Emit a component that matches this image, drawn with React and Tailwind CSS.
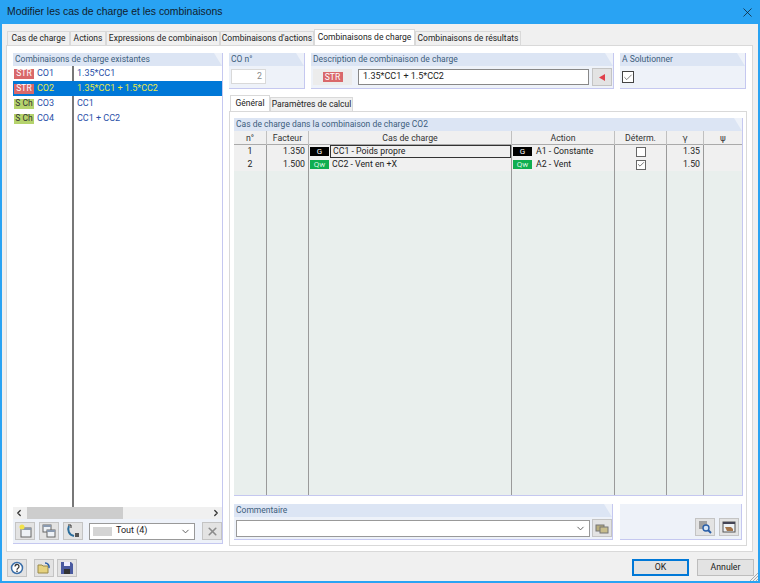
import { Check, ChevronDown, ChevronLeft, ChevronRight, X } from "lucide-react";

const font = { fontFamily: 'Roboto, "Liberation Sans", Arial, sans-serif' };

const tabs = [
  ["Cas de charge", "w-[63px]"],
  ["Actions", "w-[36px]"],
  ["Expressions de combinaison", "w-[114px]"],
  ["Combinaisons d'actions", "w-[94px]"],
  ["Combinaisons de charge", "w-[101px]"],
  ["Combinaisons de résultats", "w-[106px]"],
];

const combos = [
  { badge: "STR", color: "bg-[#d9686a] text-white", id: "CO1", text: "1.35*CC1" },
  { badge: "STR", color: "bg-[#d9686a] text-white", id: "CO2", text: "1.35*CC1 + 1.5*CC2", active: true },
  { badge: "S Ch", color: "bg-[#b5d36c] text-[#333]", id: "CO3", text: "CC1" },
  { badge: "S Ch", color: "bg-[#b5d36c] text-[#333]", id: "CO4", text: "CC1 + CC2" },
];

const cols = "grid-cols-[33px_42px_203px_103px_52px_37px_38px]";

function GroupHead({ children }) {
  return (
    <div className="h-[13px] shrink-0 bg-[#dce5f4] pl-[2px] text-[8.5px] leading-[13px] whitespace-nowrap text-[#3c5d7c] [clip-path:polygon(0_0,calc(100%-8px)_0,100%_100%,0_100%)]">
      {children}
    </div>
  );
}

function ToolButton({ children, className = "" }) {
  return (
    <div className={`flex h-[18px] w-[20px] items-center justify-center border border-[#c4c4c4] bg-[#e3e3e3] ${className}`}>
      {children}
    </div>
  );
}

function WinIcon() {
  return (
    <svg width="14" height="14" viewBox="0 0 14 14">
      <rect x="1" y="1" width="8" height="7" fill="#eef2f6" stroke="#666" />
      <rect x="1" y="1" width="8" height="2" fill="#8a9ab0" />
      <rect x="5" y="6" width="8" height="7" fill="#eef2f6" stroke="#666" />
      <rect x="5" y="6" width="8" height="2" fill="#8a9ab0" />
    </svg>
  );
}

export default function App() {
  return (
    <div className="flex h-[583px] w-[760px] flex-col overflow-hidden border-2 border-t-0 border-[#29a3f3] bg-[#f0f0f0] text-[8.75px] whitespace-nowrap text-[#222]" style={font}>
      <div className="flex h-[24px] shrink-0 items-center justify-between bg-[#29a3f3] pr-[3px] pl-[5px]">
        <span className="font-['Liberation_Sans'] text-[10.4px] text-[#10202c]">Modifier les cas de charge et les combinaisons</span>
        <X size={15} strokeWidth={1.2} className="text-[#10202c]" />
      </div>

      <div className="flex h-[21px] shrink-0 items-end pl-[5px] text-[8.5px]">
        {tabs.map(([label, w], i) => (
          <div
            key={label}
            className={
              i === 4
                ? `${w} z-10 flex h-[16px] items-center justify-center border border-b-0 border-[#d9d9d9] bg-white`
                : `${w} flex h-[14px] items-center justify-center border border-b-0 border-[#d9d9d9] bg-[#f0f0f0]`
            }
          >
            {label}
          </div>
        ))}
      </div>

      <div className="mr-[5px] ml-[4px] flex h-[507px] shrink-0 gap-[6px] border border-[#d9d9d9] bg-white pt-[7px] pl-[6px]">
        {/* left list */}
        <div className="flex h-[491px] w-[210px] shrink-0 flex-col border-r border-b border-[#c5c8f0] bg-[#eef2f9]">
          <GroupHead>Combinaisons de charge existantes</GroupHead>
          <div className="relative h-[441px] shrink-0 bg-white text-[9px]">
            <div className="absolute top-0 bottom-0 left-[59px] w-[2px] bg-[#777]" />
            {combos.map((c) => (
              <div key={c.id} className={`relative flex h-[15px] items-center ${c.active ? "bg-[#0078d7]" : ""}`}>
                <span className={`ml-[1px] flex h-[10px] w-[20px] items-center justify-center text-[8.5px] ${c.color}`}>{c.badge}</span>
                <span className={`ml-[3px] w-[40px] ${c.active ? "text-[#e8e84a]" : "text-[#2a4fa8]"}`}>{c.id}</span>
                <span className={c.active ? "text-[#e8e84a]" : "text-[#2a4fa8]"}>{c.text}</span>
              </div>
            ))}
          </div>
          <div className="flex h-[12px] shrink-0 items-center bg-[#f0f0f0] px-[1px]">
            <ChevronLeft size={10} strokeWidth={3} className="text-[#333]" />
            <div className="ml-[3px] h-[12px] w-[96px] bg-[#cdcdcd]" />
            <ChevronRight size={10} strokeWidth={3} className="ml-auto text-[#333]" />
          </div>
          <div className="flex flex-1 items-center gap-[4px] pl-[2px]">
            <ToolButton>
              <svg width="14" height="14" viewBox="0 0 14 14">
                <rect x="3" y="4" width="10" height="9" fill="#eef2f6" stroke="#666" />
                <rect x="3" y="4" width="10" height="2" fill="#8a9ab0" />
                <circle cx="4" cy="3" r="2.5" fill="#f2e24a" />
              </svg>
            </ToolButton>
            <ToolButton><WinIcon /></ToolButton>
            <ToolButton>
              <svg width="14" height="14" viewBox="0 0 14 14">
                <path d="M3 2 C1 6 3 11 8 12" fill="none" stroke="#2a6d9c" strokeWidth="2" />
                <path d="M2 1h3v3" fill="none" stroke="#333" />
                <rect x="9" y="9" width="4" height="4" fill="#555" />
              </svg>
            </ToolButton>
            <div className="ml-[2px] flex h-[17px] w-[106px] items-center border border-[#999] bg-white px-[3px]">
              <span className="h-[9px] w-[19px] bg-[#d4d4d4]" />
              <span className="ml-[4px] text-[9px]">Tout (4)</span>
              <ChevronDown size={11} className="ml-auto text-[#555]" />
            </div>
            <ToolButton className="ml-[3px] bg-[#cfcfcf]">
              <X size={13} strokeWidth={3} className="text-[#8c8c8c]" />
            </ToolButton>
          </div>
        </div>

        {/* right side */}
        <div className="flex w-[518px] shrink-0 flex-col">
          <div className="flex h-[36px] shrink-0 gap-[6px]">
            <div className="flex w-[76px] flex-col border-r border-b border-[#c5c8f0] bg-[#eef2f9]">
              <GroupHead>CO n°</GroupHead>
              <div className="mt-[3px] ml-[2px] flex h-[15px] w-[35px] items-center justify-end border border-[#d9d9d9] bg-white pr-[3px] text-[#888]">2</div>
            </div>
            <div className="flex w-[303px] flex-col border-r border-b border-[#c5c8f0] bg-[#eef2f9]">
              <GroupHead>Description de combinaison de charge</GroupHead>
              <div className="mt-[2px] flex items-center pl-[2px]">
                <div className="flex h-[16px] w-[39px] items-center justify-center bg-[#ececec]">
                  <span className="flex h-[10px] w-[20px] items-center justify-center bg-[#d9686a] text-[8.5px] text-white">STR</span>
                </div>
                <div className="ml-[6px] flex h-[16px] w-[231px] items-center border border-[#888] bg-white pl-[4px] text-[9px]">1.35*CC1 + 1.5*CC2</div>
                <ToolButton className="ml-[3px] h-[17px]">
                  <svg width="8" height="9" viewBox="0 0 8 9"><path d="M7 1v7L1 4.5z" fill="#e0404a" /></svg>
                </ToolButton>
              </div>
            </div>
            <div className="flex w-[126px] flex-col border-r border-b border-[#c5c8f0] bg-[#eef2f9]">
              <GroupHead>A Solutionner</GroupHead>
              <div className="mt-[5px] ml-[2px] flex h-[12px] w-[12px] items-center justify-center border border-[#444] bg-white">
                <Check size={11} strokeWidth={1.5} className="text-[#333]" />
              </div>
            </div>
          </div>

          <div className="mt-[5px] flex h-[17px] shrink-0 items-end pl-[1px] text-[8.5px]">
            <div className="z-10 flex h-[16px] w-[40px] items-center justify-center border border-b-0 border-[#d9d9d9] bg-white">Général</div>
            <div className="flex h-[14px] w-[83px] items-center justify-center border border-b-0 border-[#d9d9d9] bg-[#f0f0f0]">Paramètres de calcul</div>
          </div>

          <div className="flex h-[435px] shrink-0 flex-col border border-[#d9d9d9] bg-white pt-[6px] pl-[4px]">
            <div className="flex h-[378px] w-[509px] shrink-0 flex-col border-r border-b border-[#c5c8f0] bg-[#eef2f9]">
              <GroupHead>Cas de charge dans la combinaison de charge CO2</GroupHead>
              <div className={`grid h-[14px] shrink-0 ${cols} border-b border-[#aaa] bg-[#f0f0f0] text-center`}>
                {["n°", "Facteur", "Cas de charge", "Action", "Déterm."].map((h) => (
                  <div key={h} className="border-r border-[#c0c0c0] leading-[14px] text-[#333]">{h}</div>
                ))}
                <div className="border-r border-[#c0c0c0] font-['DejaVu_Sans'] leading-[14px] text-[#333]">γ</div>
                <div className="font-['DejaVu_Sans'] leading-[14px] text-[#333]">ψ</div>
              </div>
              <div className={`grid min-h-0 flex-1 ${cols} grid-rows-[13px_13px_1fr] bg-[#e9efed]`}>
                <Row
                  n="1" f="1.350" tag="G" tagColor="bg-black text-white" name="CC1 - Poids propre" action="A1 - Constante" checked={false} g="1.35" focused
                />
                <Row
                  n="2" f="1.500" tag="Qw" tagColor="bg-[#0fae50] text-[#d8f5e2]" name="CC2 - Vent en +X" action="A2 - Vent" checked g="1.50"
                />
                {[0, 1, 2, 3, 4, 5, 6].map((i) => (
                  <div key={i} className="border-r border-[#9a9a9a] last:border-r-0" />
                ))}
              </div>
            </div>

            <div className="mt-[8px] flex gap-[7px]">
              <div className="flex h-[36px] w-[379px] flex-col border-r border-b border-[#c5c8f0] bg-[#eef2f9]">
                <GroupHead>Commentaire</GroupHead>
                <div className="mt-[2px] flex items-center pl-[2px]">
                  <div className="flex h-[17px] w-[355px] items-center justify-end border border-[#999] bg-white pr-[3px]">
                    <ChevronDown size={11} className="text-[#555]" />
                  </div>
                  <ToolButton className="ml-[2px] h-[17px]">
                    <svg width="14" height="12" viewBox="0 0 14 12">
                      <rect x="1" y="3" width="8" height="6" fill="#b8ad7c" stroke="#777" />
                      <rect x="5" y="5" width="8" height="6" fill="#c8bd8c" stroke="#777" />
                    </svg>
                  </ToolButton>
                </div>
              </div>
              <div className="flex h-[36px] w-[122px] items-end justify-end gap-[4px] border-r border-b border-[#c5c8f0] bg-[#eef2f9] pr-[2px] pb-[3px]">
                <ToolButton>
                  <svg width="14" height="14" viewBox="0 0 14 14">
                    <rect x="1" y="1" width="8" height="8" fill="#a0a0a0" />
                    <circle cx="8" cy="8" r="3" fill="#d5e4f5" stroke="#2a5fa8" strokeWidth="1.4" />
                    <path d="M10 10l3 3" stroke="#2a5fa8" strokeWidth="2" />
                  </svg>
                </ToolButton>
                <ToolButton>
                  <svg width="14" height="14" viewBox="0 0 14 14">
                    <rect x="1" y="2" width="12" height="10" fill="#eef2f6" stroke="#555" />
                    <rect x="1" y="2" width="12" height="2" fill="#445" />
                    <path d="M3 7h6l2 2v2H5z" fill="#a5754a" />
                  </svg>
                </ToolButton>
              </div>
            </div>
          </div>
        </div>
      </div>

      <div className="relative flex flex-1 items-center pt-[2px] pr-[4px] pl-[5px]">
        <ToolButton>
          <svg width="14" height="14" viewBox="0 0 14 14">
            <circle cx="7" cy="7" r="5.5" fill="#fff" stroke="#3b6ea8" strokeWidth="1.5" />
            <path d="M5 5.5a2 2 0 1 1 3 1.7c-.7.4-1 .8-1 1.6" fill="none" stroke="#333" strokeWidth="1.3" />
            <rect x="6.3" y="9.6" width="1.4" height="1.4" fill="#333" />
          </svg>
        </ToolButton>
        <ToolButton className="ml-[7px]">
          <svg width="14" height="14" viewBox="0 0 14 14">
            <path d="M1 4h4l1 1h5v7H1z" fill="#e6d27e" stroke="#9a8a4a" />
            <path d="M8 2a4 4 0 0 1 4 5" fill="none" stroke="#2a5fa8" strokeWidth="1.5" />
          </svg>
        </ToolButton>
        <ToolButton className="ml-[3px]">
          <svg width="14" height="14" viewBox="0 0 14 14">
            <path d="M1 1h10l2 2v10H1z" fill="#4a5aa0" />
            <rect x="4" y="1" width="6" height="4" fill="#eef" />
            <rect x="4" y="8" width="6" height="5" fill="#333" />
          </svg>
        </ToolButton>
        <div className="ml-auto flex h-[17px] w-[57px] items-center justify-center border-2 border-[#0078d7] bg-[#e3e3e3]">OK</div>
        <div className="ml-[8px] flex h-[17px] w-[57px] items-center justify-center border border-[#bdbdbd] bg-[#e3e3e3]">Annuler</div>
        <svg className="absolute right-0 bottom-0" width="9" height="9" viewBox="0 0 9 9">
          <path d="M9 1L1 9M9 4L4 9M9 7L7 9" stroke="#aaa" />
        </svg>
      </div>
    </div>
  );
}

function Row({ n, f, tag, tagColor, name, action, checked, g, focused }) {
  const cell = "flex items-center border-r border-[#9a9a9a] bg-[#f0f0f0]";
  return (
    <>
      <div className={`${cell} justify-center`}>{n}</div>
      <div className={`${cell} justify-end pr-[3px]`}>{f}</div>
      <div className={`${cell} pl-[1px]`}>
        <span className={`flex h-[9px] w-[19px] shrink-0 items-center justify-center text-[8px] ${tagColor}`}>{tag}</span>
        <span className={`ml-[1px] flex h-[13px] flex-1 items-center pl-[2px] ${focused ? "border border-[#333]" : ""}`}>{name}</span>
      </div>
      <div className={`${cell} pl-[1px]`}>
        <span className={`flex h-[9px] w-[19px] shrink-0 items-center justify-center text-[8px] ${tagColor}`}>{tag}</span>
        <span className="ml-[4px]">{action}</span>
      </div>
      <div className={`${cell} justify-center`}>
        <span className="flex h-[10px] w-[10px] items-center justify-center border border-[#666] bg-white">
          {checked && <Check size={9} strokeWidth={2} className="text-[#333]" />}
        </span>
      </div>
      <div className={`${cell} justify-end pr-[3px]`}>{g}</div>
      <div className="flex items-center bg-[#f0f0f0]" />
    </>
  );
}
